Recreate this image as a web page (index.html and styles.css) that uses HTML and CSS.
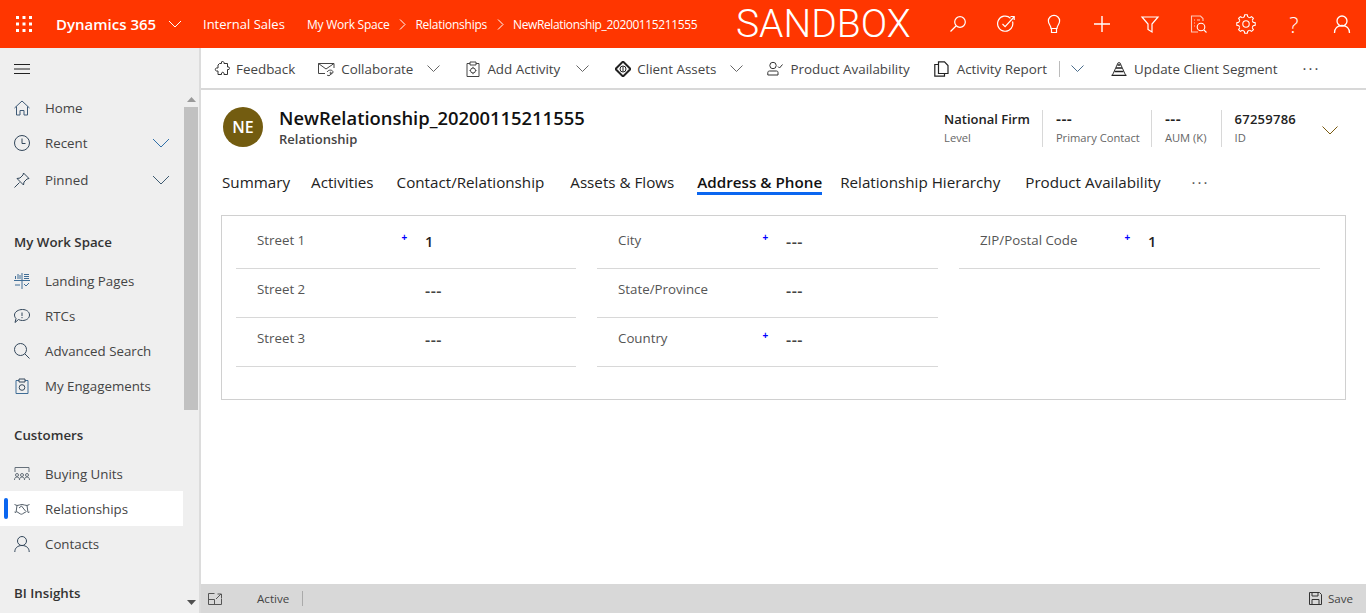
FILE: index.html
```html
<!DOCTYPE html>
<html>
<head>
  <title>NewRelationship_20200115211555</title>
  <meta name="viewport" content="width=device-width, initial-scale=1">
  <link rel="stylesheet" href="styles.css">
</head>
<body>
  <header class="topbar">
    <svg class="waffle" width="16" height="16" viewBox="0 0 16 16" fill="#fff"><rect x="0" y="0" width="3" height="3"/><rect x="6.5" y="0" width="3" height="3"/><rect x="13" y="0" width="3" height="3"/><rect x="0" y="6.5" width="3" height="3"/><rect x="6.5" y="6.5" width="3" height="3"/><rect x="13" y="6.5" width="3" height="3"/><rect x="0" y="13" width="3" height="3"/><rect x="6.5" y="13" width="3" height="3"/><rect x="13" y="13" width="3" height="3"/></svg>
    <span class="brand">Dynamics 365</span>
    <svg class="brand-chev" width="14" height="8" viewBox="0 0 14 8" fill="none" stroke="#fff"><path d="M1 1l6 6 6-6"/></svg>
    <span class="app-name">Internal Sales</span>
    <nav class="crumbs">
      <span>My Work Space</span>
      <svg width="7" height="11" viewBox="0 0 7 11" fill="none" stroke="#fff"><path d="M1 .5l5 5-5 5"/></svg>
      <span>Relationships</span>
      <svg width="7" height="11" viewBox="0 0 7 11" fill="none" stroke="#fff"><path d="M1 .5l5 5-5 5"/></svg>
      <span class="crumb-last">NewRelationship_20200115211555</span>
    </nav>
    <span class="env">SANDBOX</span>
    <div class="top-icons">
      <svg width="20" height="20" viewBox="0 0 20 20" fill="none" stroke="#fff" stroke-width="1.2"><circle cx="12" cy="8" r="5.3"/><path d="M8 12L2.500 17.500"/></svg>
      <svg width="20" height="20" viewBox="0 0 20 20" fill="none" stroke="#fff" stroke-width="1.2"><path d="M14.500 4.200A7.600 7.600 0 1 0 16.500 7.500"/><path d="M6.500 10l2.600 2.600L18 3"/><path d="M14.500 2.500h3.700v3.500"/></svg>
      <svg width="20" height="20" viewBox="0 0 20 20" fill="none" stroke="#fff" stroke-width="1.2"><path d="M7 14.500c0-3-2.600-4-2.600-7.500a5.600 5.600 0 0 1 11.200 0c0 3.500-2.600 4.500-2.600 7.500z"/><path d="M7.500 14.500V18.500h5v-4"/></svg>
      <svg width="20" height="20" viewBox="0 0 20 20" fill="none" stroke="#fff" stroke-width="1.400"><path d="M10 2v16M2 10h16"/></svg>
      <svg width="20" height="20" viewBox="0 0 20 20" fill="none" stroke="#fff" stroke-width="1.2"><path d="M2 3h16l-6 7v8l-4-2.500V10z"/></svg>
      <svg width="20" height="20" viewBox="0 0 20 20" fill="none" stroke="#ffc9b8" stroke-width="1.100"><path d="M10 18H3.500V2h9L15 4.500V7"/><path d="M6 6h1M6 9h1M6 12h1M9 6h3"/><circle cx="13" cy="13" r="3.800" stroke="#fff"/><path d="M15.800 15.800L18.500 18.500" stroke="#fff"/></svg>
      <svg width="20" height="20" viewBox="0 0 20 20" fill="none" stroke="#fff" stroke-width="1.100"><circle cx="10" cy="10" r="7.200" stroke-dasharray="2.050 3.600" stroke-dashoffset="-1.800"/><circle cx="10" cy="10" r="3.200"/><path d="M8.200 3L8.700 .8h2.600l.5 2.200M17 8.200l2.200.5v2.600l-2.200.5M11.800 17l-.5 2.200H8.700L8.200 17M3 11.800l-2.200-.5V8.700L3 8.200"/><path transform="rotate(45 10 10)" d="M8.200 3L8.700 .8h2.600l.5 2.200M17 8.200l2.200.5v2.600l-2.200.5M11.800 17l-.5 2.200H8.700L8.200 17M3 11.800l-2.200-.5V8.700L3 8.200"/></svg>
      <span class="help">?</span>
      <svg width="20" height="20" viewBox="0 0 20 20" fill="none" stroke="#fff" stroke-width="1.300"><circle cx="10" cy="7" r="5"/><path d="M2.500 19c0-4.500 3-7.500 7.500-7.500s7.500 3 7.500 7.500"/></svg>
    </div>
  </header>

  <div class="main">
    <aside class="sidebar">
      <div class="burger"><svg width="16" height="10" viewBox="0 0 16 10" stroke="#222"><path d="M0 .5h16M0 5h16M0 9.500h16"/></svg></div>
      <div class="side-body">
        <nav class="side-nav">
          <a class="side-item first">
            <svg width="16" height="16" viewBox="0 0 16 16" fill="none" stroke="#3f5a76"><path d="M.5 8L8 1l7.500 7"/><path d="M2.500 6.500V15H6v-4.500h4V15h3.500V6.500"/></svg>
            <span>Home</span>
          </a>
          <a class="side-item">
            <svg width="16" height="16" viewBox="0 0 16 16" fill="none" stroke="#33475b"><circle cx="8" cy="8" r="7.500"/><path d="M8 3.500V8.500h3.500"/></svg>
            <span>Recent</span>
            <svg class="side-chev" width="18" height="10" viewBox="0 0 18 10" fill="none" stroke="#2f6fa8"><path d="M1 1l8 8 8-8"/></svg>
          </a>
          <a class="side-item pinned">
            <svg width="16" height="16" viewBox="0 0 16 16" fill="none" stroke="#33475b"><path d="M9.500 1l5.500 5.500-2 .5-3 3-.5 3L3 6.500l3-.5 3-3z"/><path d="M5.500 10.500L.5 15.500"/></svg>
            <span>Pinned</span>
            <svg class="side-chev" width="18" height="10" viewBox="0 0 18 10" fill="none" stroke="#3d5a70"><path d="M1 1l8 8 8-8"/></svg>
          </a>

          <h4 class="side-head workspace">My Work Space</h4>
          <a class="side-item">
            <svg width="16" height="16" viewBox="0 0 16 16" fill="none" stroke="#3f6d96"><path d="M8 0v16M0 7.500h16"/><path d="M1.500 6V3M4 6V1M6 6V2M10 1.500h5M10 3.500h5M10 5.500h5M1 12h5M10 11l2 2 3-3"/></svg>
            <span>Landing Pages</span>
          </a>
          <a class="side-item">
            <svg width="16" height="16" viewBox="0 0 16 16" fill="none" stroke="#33475b"><path d="M8.500 1.500c4 0 7 2.300 7 5.500s-3 5.500-7 5.500c-1.500 0-3-.3-4-1l-3.500 3 1-4C1 9.500.5 8.300.5 7c0-3.200 4-5.500 8-5.500z"/><path d="M8 4.500V8M8 9v1.200"/></svg>
            <span>RTCs</span>
          </a>
          <a class="side-item">
            <svg width="16" height="16" viewBox="0 0 16 16" fill="none" stroke="#33475b"><circle cx="6.500" cy="6.500" r="6"/><path d="M10.800 10.800L15.500 15.500"/></svg>
            <span>Advanced Search</span>
          </a>
          <a class="side-item">
            <svg width="16" height="16" viewBox="0 0 16 16" fill="none" stroke="#3f6d96"><path d="M5 2.500H2V15.500H14V2.500H11"/><path d="M5 1h6v3H5z" stroke="#33475b"/><circle cx="8" cy="9.500" r="2.800" stroke="#33475b"/></svg>
            <span>My Engagements</span>
          </a>

          <h4 class="side-head customers">Customers</h4>
          <a class="side-item">
            <svg width="16" height="16" viewBox="0 0 16 16" fill="none" stroke="#66707a"><path d="M1 6V1.500h14V6"/><circle cx="3" cy="9" r="1.500"/><circle cx="8" cy="9" r="1.500"/><circle cx="13" cy="9" r="1.500"/><path d="M.5 14c0-2 1-3 2.500-3s2.500 1 2.500 3M5.500 14c0-2 1-3 2.500-3s2.500 1 2.500 3M10.500 14c0-2 1-3 2.500-3s2.500 1 2.500 3"/></svg>
            <span>Buying Units</span>
          </a>
          <a class="side-item active">
            <svg width="16" height="16" viewBox="0 0 16 16" fill="none" stroke="#55606b"><path d="M.5 3.500L3 4.500l-1 7-1.500-.5M15.500 3.500L13 4.500l1 7 1.500-.5"/><path d="M3 4.500c2 0 3-1 5-1s3 1 5 1M2.500 10.500l4 2.500c1 .5 2 0 2.500-.5l3.500-2M5 7l2.500-2 4 5"/></svg>
            <span>Relationships</span>
          </a>
          <a class="side-item">
            <svg width="16" height="16" viewBox="0 0 16 16" fill="none" stroke="#33475b"><circle cx="8" cy="5" r="4.500"/><path d="M.8 16c0-4 2.800-6.500 7.200-6.500s7.200 2.500 7.200 6.500"/></svg>
            <span>Contacts</span>
          </a>

          <h4 class="side-head bi">BI Insights</h4>
        </nav>
        <div class="scroll">
          <svg class="arrow-up" width="9" height="5" viewBox="0 0 9 5" fill="#9a9a9a"><path d="M4.500 0L9 5H0z"/></svg>
          <div class="thumb"></div>
          <svg class="arrow-down" width="9" height="5" viewBox="0 0 9 5" fill="#505050"><path d="M0 0h9L4.500 5z"/></svg>
        </div>
      </div>
    </aside>

    <div class="content">
      <div class="cmdbar">
        <button class="cmd" type="button">
          <svg width="16" height="16" viewBox="0 0 16 16" fill="none" stroke="#333"><path d="M5.500 2.500h2V.8c1-.6 2-.4 2.500.7v1h3.500v3.500h1.500c.6 1 .6 2 0 2.500h-1.500v5H10v-1.500c-.5-1-2-1-2.500 0v1.500H4v-3.500H2.500c-1.600-.2-1.600-2.800 0-3H4V4z"/></svg>
          <span>Feedback</span>
        </button>
        <button class="cmd c-collab" type="button">
          <svg width="17" height="16" viewBox="0 0 17 16" fill="none" stroke="#444"><path d="M7 12.500H.5V2.500h15.500V7"/><path d="M.5 2.500L8 8l8-5.500"/><path d="M9 11c2-3 6-2 6 0s-3 2.500-3 1 2-1 1 1-3 2-4 1"/></svg>
          <span>Collaborate</span>
          <svg class="chev" width="13" height="7" viewBox="0 0 13 7" fill="none" stroke="#666"><path d="M.5.500l6 6 6-6"/></svg>
        </button>
        <button class="cmd c-add" type="button">
          <svg width="16" height="16" viewBox="0 0 16 16" fill="none" stroke="#444"><path d="M5 2.500H2V15.500H14V2.500H11"/><path d="M5 1h6v3H5z"/><circle cx="8" cy="9.500" r="2.500"/><path d="M8 5.800v1.200M8 12v1.200M4.500 9.500h1.200M10.300 9.500h1.200"/></svg>
          <span>Add Activity</span>
          <svg class="chev" width="13" height="7" viewBox="0 0 13 7" fill="none" stroke="#666"><path d="M.5.500l6 6 6-6"/></svg>
        </button>
        <button class="cmd c-client" type="button">
          <svg width="16" height="16" viewBox="0 0 16 16"><path d="M8 .5L15.500 8 8 15.500.5 8z" fill="none" stroke="#222" stroke-width="2"/><circle cx="8" cy="8" r="3" fill="none" stroke="#222"/><path d="M8 5.500v5" stroke="#222"/></svg>
          <span>Client Assets</span>
          <svg class="chev" width="13" height="7" viewBox="0 0 13 7" fill="none" stroke="#666"><path d="M.5.500l6 6 6-6"/></svg>
        </button>
        <button class="cmd" type="button">
          <svg width="17" height="16" viewBox="0 0 17 16" fill="none" stroke="#333"><circle cx="6" cy="4.500" r="3.200"/><path d="M.8 14V11.500c0-1 .8-1.500 1.700-1.500h7c.9 0 1.500.5 1.500 1.500V14z"/><path d="M11 5.500l1.500 1.500 3-3.500"/></svg>
          <span>Product Availability</span>
        </button>
        <button class="cmd c-report" type="button">
          <svg width="16" height="16" viewBox="0 0 16 16" fill="none" stroke="#222" stroke-width="1.200"><path d="M4.500 12.500V.8h6L14 4.500v8z"/><path d="M4.500 3.500H.8v11.700h9.700v-2.700"/></svg>
          <span>Activity Report</span>
          <i class="cmd-sep"></i>
          <svg class="chev" width="13" height="7" viewBox="0 0 13 7" fill="none" stroke="#4a6d8c"><path d="M.5.500l6 6 6-6"/></svg>
        </button>
        <button class="cmd" type="button">
          <svg width="17" height="14" viewBox="0 0 17 14" fill="none" stroke="#222"><path d="M6.500 3h3M5 6h6M3.500 9.500h9M.5 13.500h15" stroke-width="1.300"/><path d="M7 .8h2L14.500 13M1.500 13L7 .8" stroke-width=".9"/></svg>
          <span>Update Client Segment</span>
        </button>
        <span class="dots">···</span>
      </div>

      <section class="record">
        <div class="rec-head">
          <div class="avatar">NE</div>
          <div class="rec-title">
            <h1>NewRelationship_20200115211555</h1>
            <div class="rec-type">Relationship</div>
          </div>
          <div class="rec-stats">
            <div class="stat s-level"><b>National Firm</b><small>Level</small></div>
            <div class="stat s-contact"><b class="dash">---</b><small>Primary Contact</small></div>
            <div class="stat s-aum"><b class="dash">---</b><small>AUM (K)</small></div>
            <div class="stat s-id"><b>67259786</b><small>ID</small></div>
            <svg class="stat-chev" width="16" height="9" viewBox="0 0 16 9" fill="none" stroke="#7a5a10"><path d="M.5.500l7.500 7.500L15.500.500"/></svg>
          </div>
        </div>

        <ul class="tabs">
          <li class="t1">Summary</li>
          <li class="t2">Activities</li>
          <li class="t3">Contact/Relationship</li>
          <li class="t4">Assets &amp; Flows</li>
          <li class="t5 on">Address &amp; Phone</li>
          <li class="t6">Relationship Hierarchy</li>
          <li class="t7">Product Availability</li>
          <li class="tab-dots">···</li>
        </ul>

        <div class="form-card">
          <div class="col">
            <div class="field"><label>Street 1</label><i class="req">+</i><b>1</b></div>
            <div class="field"><label>Street 2</label><span>---</span></div>
            <div class="field"><label>Street 3</label><span>---</span></div>
          </div>
          <div class="col">
            <div class="field"><label>City</label><i class="req">+</i><span>---</span></div>
            <div class="field"><label>State/Province</label><span>---</span></div>
            <div class="field"><label>Country</label><i class="req">+</i><span>---</span></div>
          </div>
          <div class="col">
            <div class="field"><label>ZIP/Postal Code</label><i class="req">+</i><b>1</b></div>
          </div>
        </div>
      </section>

      <footer class="statusbar">
        <svg width="14" height="12" viewBox="0 0 14 12" fill="none" stroke="#555"><path d="M13.500 5.500v6H.5V.5h6"/><path d="M.5 6.500h6v5"/><path d="M8 6l5-5M9.500 1H13.500V5"/></svg>
        <span class="st-active">Active</span>
        <i class="st-sep"></i>
        <span class="st-save">
          <svg width="13" height="13" viewBox="0 0 13 13" fill="none" stroke="#333"><path d="M.5.500h10l2 2v10H.5z"/><path d="M3 .5v3.500h6V.5M3 12.500V7.500h7v5"/></svg>
          Save
        </span>
      </footer>
    </div>
  </div>
</body>
</html>
```

FILE: styles.css
```css
* { box-sizing: border-box; }
html, body { height: 100%; }
body { margin: 0; overflow: hidden; font-family: "Open Sans", "Noto Sans", sans-serif; font-size: 13.3px; color: #333; background: #fff; }
svg { flex: none; display: block; }

.topbar { height: 48px; background: #ff3600; color: #fff; display: flex; align-items: center; padding-left: 16px; }
.brand { margin-left: 24px; font-size: 15px; font-weight: 600; width: 102px; white-space: nowrap; }
.brand-chev { margin-left: 10px; }
.app-name { margin-left: 21px; font-size: 13px; width: 83px; white-space: nowrap; }
.crumbs { margin-left: 21px; display: flex; align-items: center; gap: 9.5px; font-size: 12px; white-space: nowrap; width: 400px; letter-spacing: -.25px; }
.crumb-last { letter-spacing: -.38px; }
.env { font-family: Roboto, sans-serif; font-size: 39px; font-weight: 300; width: 212px; margin-left: 29px; white-space: nowrap; line-height: 46px; }
.top-icons { display: flex; align-items: center; gap: 28px; }
.help { font-size: 22px; font-weight: 300; width: 20px; text-align: center; line-height: 20px; }

.main { display: flex; height: 565px; }

.sidebar { width: 201px; background: #efefef; border-right: 2px solid #dcdcdc; display: flex; flex-direction: column; }
.burger { height: 42px; padding: 16px 0 0 14px; }
.side-body { flex: 1; display: flex; min-height: 0; }
.side-nav { width: 183px; }
.side-item { display: flex; align-items: center; height: 35px; padding-left: 14px; color: #444; white-space: nowrap; }
.side-item > span { margin-left: 15px; }
.side-item.pinned { margin-top: 2px; }
.side-chev { margin-left: auto; margin-right: 13px; }
.side-item.active { background: #fff; position: relative; }
.side-item.active::before { content: ""; position: absolute; left: 4px; top: 7px; width: 4px; height: 21px; border-radius: 2px; background: #0a66f0; }
.side-head { margin: 0; padding-left: 14px; font-size: 13.3px; font-weight: 600; color: #333; line-height: 20px; }
.workspace { margin-top: 35px; margin-bottom: 11px; }
.customers { margin-top: 22px; margin-bottom: 11px; }
.bi { margin-top: 22px; }
.scroll { width: 16px; position: relative; }
.thumb { position: absolute; left: 1px; top: 17px; width: 14px; height: 303px; background: #c1c1c1; }
.arrow-up { position: absolute; left: 4px; top: 7px; }
.arrow-down { position: absolute; left: 4px; top: 510px; }

.content { flex: 1; display: flex; flex-direction: column; min-width: 0; }

.cmdbar { height: 42px; border-bottom: 2px solid #d8d8d8; display: flex; align-items: center; padding-left: 13px; }
.cmd { border: 0; background: none; padding: 1px 0 0; margin-right: 23px; font: inherit; font-size: 13.4px; color: #444; display: flex; align-items: center; gap: 6px; white-space: nowrap; }
.c-collab { margin-right: 25px; }
.c-add { margin-right: 26px; }
.c-add .chev { margin-left: 10px; }
.c-client { margin-right: 24px; }
.c-report { margin-left: 1px; margin-right: 27px; gap: 7px; }
.cmd .chev { margin-left: 8px; }
.cmd.c-add .chev { margin-left: 10px; }
.cmd-sep { width: 1px; height: 16px; background: #bbb; margin-left: 5px; }
.cmd .cmd-sep + .chev { margin-left: 4px; }
.dots { font-size: 15px; letter-spacing: 2px; color: #444; margin-left: 2px; }

.record { flex: 1; padding: 0 20px 0 20px; min-height: 0; }
.rec-head { display: flex; height: 78px; padding-top: 17px; align-items: flex-start; }
.avatar { width: 40px; height: 40px; border-radius: 50%; background: #735c10; color: #fff; font-weight: 600; font-size: 16px; display: flex; align-items: center; justify-content: center; margin-left: 2px; }
.rec-title { margin-left: 16px; margin-top: -1px; }
.rec-title h1 { margin: 0; font-size: 18.4px; line-height: 24px; font-weight: 600; color: #111; white-space: nowrap; }
.rec-type { font-size: 13px; font-weight: 600; color: #444; line-height: 18px; }
.rec-stats { margin-left: auto; display: flex; align-items: flex-start; }
.stat { height: 37px; padding: 0 11px 0 13px; border-left: 1px solid #d8d8d8; display: flex; flex-direction: column; margin-top: 3px; }
.stat b { font-size: 13px; font-weight: 600; color: #222; line-height: 18px; white-space: nowrap; }
.stat b.dash { font-size: 15.5px; letter-spacing: .5px; }
.stat small { font-size: 11.200px; color: #666; line-height: 20px; white-space: nowrap; }
.s-level { border-left: 0; padding: 0 12px 0 0; }
.s-aum { padding-right: 14px; }
.s-id b { letter-spacing: .25px; }
.stat-chev { margin: 19px 8px 0 15px; }

.tabs { list-style: none; margin: 0; padding: 0 0 0 1px; display: flex; height: 47px; }
.tabs li { font-size: 15.2px; color: #222; line-height: 20px; padding-top: 4px; height: 27px; white-space: nowrap; margin-right: 22px; }
.tabs .t1 { margin-right: 21px; }
.tabs .t2 { margin-right: 23px; }
.tabs .t3 { margin-right: 26px; }
.tabs .t4 { margin-right: 23px; }
.tabs .t5 { margin-right: 18px; }
.tabs .t6 { margin-right: 25px; }
.tabs .t7 { margin-right: 31px; }
.tabs li.on { font-weight: 600; color: #111; border-bottom: 3px solid #0a66f0; }
.tabs .tab-dots { color: #555; letter-spacing: 2px; }

.form-card { border: 1px solid #d0d0d0; height: 185px; padding: 4px 14px; display: grid; grid-template-columns: 340px 341px 361px; column-gap: 21px; }
.field { position: relative; height: 49px; border-bottom: 1px solid #d8d8d8; display: flex; align-items: flex-start; padding: 10px 0 0 21px; }
.field label { color: #555; width: 168px; line-height: 20px; white-space: nowrap; }
.field b, .field span { font-weight: 600; color: #222; line-height: 22px; margin-top: 1px; }
.field b { font-size: 14.5px; }
.field span { color: #444; font-size: 16px; letter-spacing: .5px; }
.req { color: #0000ff; font-style: normal; font-weight: 700; font-size: 10px; line-height: 8px; position: absolute; left: 165.5px; top: 13px; }

.statusbar { height: 29px; background: #d8d8d8; display: flex; align-items: center; padding: 0 13px 0 7px; font-size: 11.600px; color: #444; }
.st-active { margin-left: 35px; }
.st-sep { width: 1px; height: 15px; background: #aaa; margin-left: 13px; }
.st-save { margin-left: auto; display: flex; align-items: center; gap: 6px; }
```
